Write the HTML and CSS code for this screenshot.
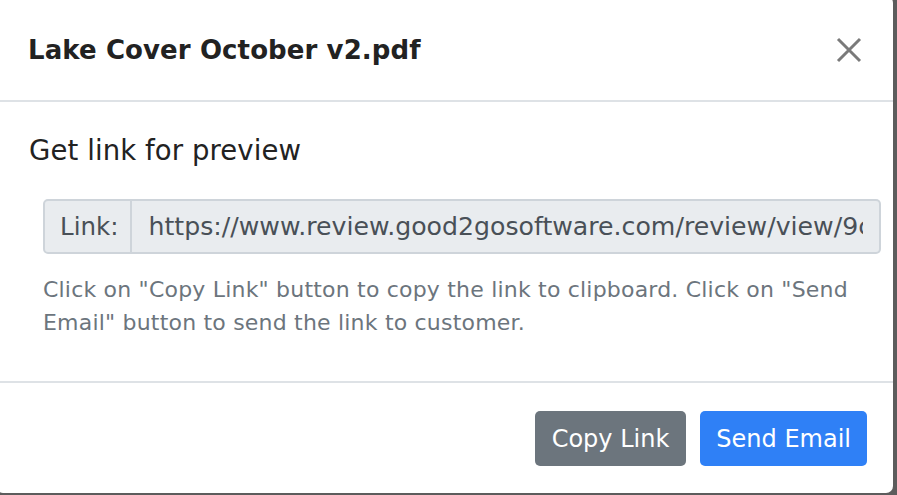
FILE: index.html
```html
<!DOCTYPE html>
<html lang="en">
<head>
<meta charset="UTF-8">
<title>Get link for preview</title>
<link rel="stylesheet" href="styles.css">
</head>
<body>

<div class="modal">
    <header class="modal-header">
        <h5 class="modal-title">Lake Cover October v2.pdf</h5>
        <button class="close" aria-label="Close">
            <svg width="26" height="26" viewBox="0 0 26 26">
                <path d="M2 2 L24 24 M24 2 L2 24" stroke="#7a7a7a" stroke-width="3"/>
            </svg>
        </button>
    </header>

    <section class="modal-body">
        <h4 class="lead">Get link for preview</h4>
        <div class="input-group">
            <span class="addon">Link:</span>
            <input class="link-input" type="text" readonly value="https://www.review.good2gosoftware.com/review/view/9c4f2a7e">
        </div>
        <p class="help">Click on "Copy Link" button to copy the link to clipboard. Click on "Send Email" button to send the link to customer.</p>
    </section>

    <footer class="modal-footer">
        <button class="btn btn-secondary">Copy Link</button>
        <button class="btn btn-primary">Send Email</button>
    </footer>
</div>

</body>
</html>
```

FILE: styles.css
```css
:root {
    --border: #dee2e6;
    --muted: #6c757d;
    --blue: #2f80f6;
}

body {
    margin: 0;
    background-color: #5c5c5c;
    font-family: 'DejaVu Sans', 'Noto Sans', sans-serif;
    color: #212529;
    overflow: hidden;
}

.modal {
    width: 897px;
    height: 497px;
    margin: -4px 0 0 -4px;
    background-color: #fff;
    border-radius: 7px;
    display: flex;
    flex-direction: column;
}

.modal-header {
    height: 106px;
    flex-shrink: 0;
    box-sizing: border-box;
    padding: 4px 31px 0 32px;
    display: flex;
    align-items: center;
    justify-content: space-between;
    border-bottom: 2px solid var(--border);
}

.modal-title {
    margin: 0;
    font-size: 26px;
    font-weight: bold;
    letter-spacing: 0.1px;
    color: #222;
}

.close {
    border: none;
    background: none;
    padding: 0;
    width: 26px;
    height: 26px;
    display: flex;
}

.modal-body {
    padding: 32px 12px 0 33px;
    height: 279px;
    flex-shrink: 0;
    box-sizing: border-box;
}

.lead {
    margin: 0;
    font-size: 27.5px;
    line-height: 33px;
    font-weight: normal;
    letter-spacing: 0.1px;
    color: #222;
}

.input-group {
    display: flex;
    margin: 32px 0 0 14px;
    height: 55px;
}

.addon {
    display: flex;
    align-items: center;
    padding: 0 12px 0 15px;
    background-color: #e9ecef;
    border: 2px solid #ced4da;
    border-radius: 5px 0 0 5px;
    font-size: 24.5px;
    color: #495057;
}

.link-input {
    flex: 1;
    min-width: 0;
    border: 2px solid #ced4da;
    border-left: none;
    border-radius: 0 5px 5px 0;
    background-color: #e9ecef;
    padding: 0 16px;
    font-family: inherit;
    font-size: 25.2px;
    color: #495057;
    outline: none;
}

.help {
    margin: 19px 0 0 14px;
    font-size: 22px;
    line-height: 33px;
    letter-spacing: 0.2px;
    color: var(--muted);
}

.modal-footer {
    flex: 1;
    border-top: 2px solid var(--border);
    display: flex;
    justify-content: flex-end;
    align-items: flex-start;
    gap: 14px;
    padding: 28px 26px 0 0;
}

.btn {
    height: 55px;
    border: none;
    border-radius: 5px;
    padding: 0 16px;
    font-family: inherit;
    font-size: 24px;
    color: #fff;
}

.btn-secondary {
    background-color: #6c757d;
    padding: 0 17px;
}

.btn-primary {
    background-color: var(--blue);
}
```
